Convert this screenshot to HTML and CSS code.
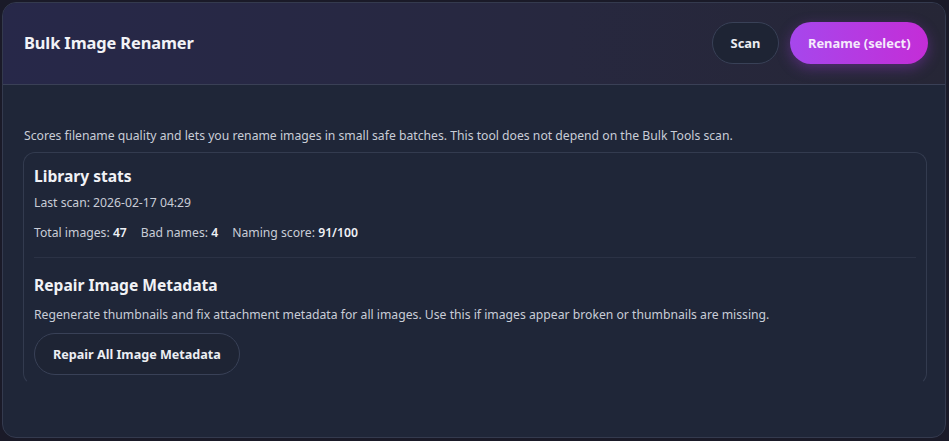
FILE: index.html
```html
<!DOCTYPE html>
<html>
<head>
<meta charset="utf-8">
<link rel="stylesheet" href="styles.css">
</head>
<body>
<div class="panel">
  <header class="head">
    <h1 class="title">Bulk Image Renamer</h1>
    <div class="actions">
      <button class="btn btn-ghost">Scan</button>
      <button class="btn btn-primary">Rename (select)</button>
    </div>
  </header>
  <main class="body">
    <p class="desc">Scores filename quality and lets you rename images in small safe batches. This tool does not depend on the Bulk Tools scan.</p>
    <section class="card">
      <h2 class="card-title">Library stats</h2>
      <p class="line first">Last scan: 2026-02-17 04:29</p>
      <p class="line stats"><span>Total images: <b>47</b></span><span>Bad names: <b>4</b></span><span>Naming score: <b>91/100</b></span></p>
      <hr class="divider">
      <h2 class="card-title">Repair Image Metadata</h2>
      <p class="line regen">Regenerate thumbnails and fix attachment metadata for all images. Use this if images appear broken or thumbnails are missing.</p>
      <button class="btn btn-ghost btn-repair">Repair All Image Metadata</button>
    </section>
  </main>
</div>
</body>
</html>
```

FILE: styles.css
```css
* { box-sizing: border-box; }
html, body { margin: 0; padding: 0; }
body {
  background: #1a1a28;
  font-family: "Noto Sans", "Open Sans", sans-serif;
  color: #e6e8ee;
  padding: 2px 3px 3px 2px;
  height: 441px;
}
.panel {
  height: 436px;
  border: 1px solid #343a4e;
  border-radius: 14px;
  background: #1f2638;
  overflow: hidden;
  display: flex;
  flex-direction: column;
}
.head {
  height: 82px;
  flex: none;
  display: flex;
  align-items: center;
  justify-content: space-between;
  padding: 0 17px 2px 21px;
  background: linear-gradient(90deg, #272849 0%, #27283f 60%, #262636 100%);
  border-bottom: 1px solid #3a4056;
}
.title {
  margin: 0;
  font-size: 16.4px;
  font-weight: 700;
  color: #f2f3f7;
  letter-spacing: -0.1px;
}
.actions { display: flex; gap: 11px; align-items: center; }
.btn {
  font-family: inherit;
  font-weight: 700;
  font-size: 12.6px;
  height: 42px;
  border-radius: 21px;
  padding: 0 18px;
  cursor: pointer;
  color: #eceef3;
}
.btn-ghost {
  background: #1e2434;
  border: 1px solid #394157;
}
.head .btn { font-size: 12.9px; }
.head .btn-ghost { padding: 0 18px; }
.btn-primary {
  border: none;
  background: linear-gradient(90deg, #a647ec 0%, #c42dd7 100%);
  box-shadow: 0 4px 14px rgba(170, 60, 230, 0.35);
  padding: 0 17.5px;
  color: #f5eafc;
}
.body {
  flex: 1;
  padding: 42px 18px 0 20px;
}
.desc {
  margin: 0 0 7px 1px;
  font-size: 12.2px;
  color: #c9cdd7;
  line-height: 18px;
}
.card {
  border: 1px solid #333b4f;
  border-bottom-color: transparent;
  border-radius: 12px;
  padding: 12px 10px 9px 10px;
  height: 233px;
}
.card-title {
  margin: 0;
  font-size: 15.6px;
  font-weight: 700;
  color: #f1f2f6;
  line-height: 22px;
}
.line {
  margin: 4px 0 0;
  font-size: 12.2px;
  line-height: 20px;
  color: #c9cdd7;
}
.line.first { margin-top: 6px; }
.line.regen { margin-top: 9px; }
.stats { margin-top: 10px; display: flex; gap: 14px; }
.stats b { color: #eef0f5; font-weight: 600; }
.divider {
  border: none;
  border-top: 1px solid #2b3245;
  margin: 14px 0 16px;
}
.btn-repair { margin-top: 8px; padding: 0 18px; }
```
